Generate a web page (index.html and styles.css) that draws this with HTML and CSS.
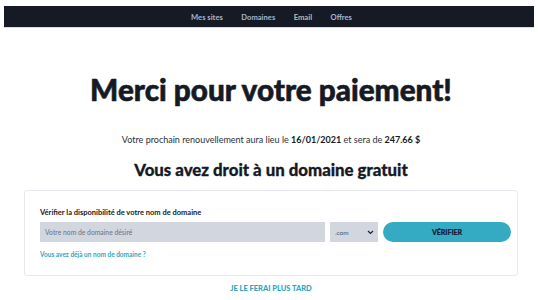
FILE: index.html
```html
<!DOCTYPE html>
<html lang="fr">
<head>
<meta charset="utf-8">
<title>Merci</title>
<link rel="stylesheet" href="styles.css">
</head>
<body>
<div class="page">
  <nav class="topbar">
    <a class="nav-link">Mes sites</a>
    <a class="nav-link">Domaines</a>
    <a class="nav-link nav-email">Email</a>
    <a class="nav-link">Offres</a>
  </nav>
  <main class="content">
    <h1 class="title">Merci pour votre paiement!</h1>
    <p class="renewal">Votre prochain renouvellement aura lieu le <b>16/01/2021</b> et sera de <b>247.66 $</b></p>
    <h2 class="subtitle">Vous avez droit à un domaine gratuit</h2>
    <section class="card">
      <label class="card-label">Vérifier la disponibilité de votre nom de domaine</label>
      <div class="search-row">
        <div class="domain-input">Votre nom de domaine désiré</div>
        <div class="tld-select"><span>.com</span>
          <svg class="chevron" width="7" height="5" viewBox="0 0 7 5"><path d="M1 1l2.5 2.5L6 1" fill="none" stroke="#1f2433" stroke-width="1.2"/></svg>
        </div>
        <button class="verify-btn">VÉRIFIER</button>
      </div>
      <a class="own-domain">Vous avez déjà un nom de domaine ?</a>
    </section>
    <a class="later">JE LE FERAI PLUS TARD</a>
  </main>
</div>
</body>
</html>
```
FILE: styles.css
```css
* { box-sizing: border-box; }
html, body { margin: 0; padding: 0; background: #fff; }
body { font-family: Lato, "Open Sans", sans-serif; color: #161a25; }
.page { padding: 6px 4px 0; }
.topbar {
  height: 22px;
  background: #161a25;
  border-bottom: 1px solid #d9dce2;
  display: flex;
  justify-content: center;
  align-items: center;
  gap: 18.5px;
  padding-left: 5px;
}
.nav-link { font-size: 7.6px; font-weight: 700; color: #a6b6d2; }
.nav-email { color: #c9b9a4; }
.content { display: flex; flex-direction: column; align-items: center; padding-left: 4px; }
.title { margin: 45px 0 0; font-size: 29.7px; font-weight: 900; line-height: 34px; -webkit-text-stroke: 0.6px #161a25; }
.renewal { margin: 27px 0 0; font-size: 9px; line-height: 12px; color: #2a2f3b; }
.renewal b { font-weight: 700; color: #161a25; }
.subtitle { margin: 13px 0 0; font-size: 16.8px; font-weight: 900; line-height: 22px; -webkit-text-stroke: 0.3px #161a25; }
.card {
  margin-top: 9px;
  width: 494px;
  border: 1px solid #e6e8ee;
  border-radius: 3px;
  padding: 17px 6px 15px 15px;
  display: flex;
  flex-direction: column;
}
.card-label { font-size: 7.5px; font-weight: 700; line-height: 10px; }
.search-row { display: flex; gap: 5px; margin-top: 4px; height: 20px; }
.domain-input {
  width: 285px; background: #d1d6df; font-size: 6.8px; color: #6b7282;
  display: flex; align-items: center; padding-left: 5px;
}
.tld-select {
  width: 48px; background: #d1d6df; font-size: 6.5px; color: #4d5464;
  display: flex; align-items: center; justify-content: space-between; padding: 0 4px 0 5px;
}
.verify-btn {
  width: 128px; border: 0; border-radius: 10px; background: #35abc3;
  font-family: inherit; font-size: 7px; font-weight: 900; color: #172238; padding: 0;
  -webkit-text-stroke: 0.2px #172238;
}
.own-domain { margin-top: 8px; font-size: 6.5px; line-height: 10px; color: #2fa6bf; font-weight: 700; }
.later { margin-top: 8px; font-size: 7.5px; font-weight: 900; color: #2fa6bf; }
```
